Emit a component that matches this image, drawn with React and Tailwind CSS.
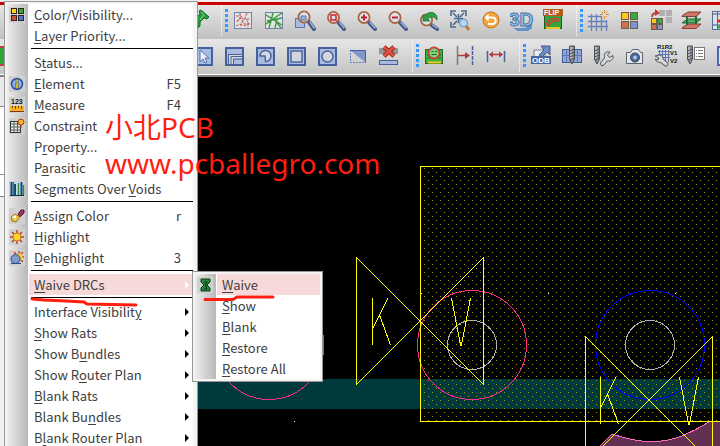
import { useState } from 'react';

const Svg = ({ children, size = 25 }) => (
    <svg width={size} height={size} viewBox={`0 0 ${size} ${size}`} fill="none" aria-hidden="true" className="shrink-0">
        {children}
    </svg>
);

/* ---------- toolbar icons (25 x 25) ---------- */

const Lens = ({ x, y, ex = 20, ey = 21, children }) => (
    <>
        <path d={`M${x + 5} ${y + 5}L${ex} ${ey}`} stroke="#3f5288" strokeWidth="4" strokeLinecap="round" />
        <path d={`M${x + 6} ${y + 5}L${ex} ${ey - 1}`} stroke="#9fb0d8" strokeWidth="1.5" strokeLinecap="round" />
        <circle cx={x} cy={y} r="5.6" fill="#dbe3f0" fillOpacity=".85" stroke="#a8663c" strokeWidth="1.8" />
        {children}
    </>
);

const Box = () => <rect x="4" y="5" width="17" height="17" fill="#a9bbe0" stroke="#46609a" strokeWidth="2" />;

const Screw = ({ x }) => (
    <>
        <path d={`M${x} 3h5v13l-2.5 5l-2.5-5z`} fill="#8d9196" stroke="#4a4e55" />
        <path d={`M${x + 1.5} 4v12`} stroke="#e4e6e8" />
        <path d={`M${x} 8l5-2M${x} 11l5-2M${x} 14l5-2M${x} 17l5-2`} stroke="#4a4e55" />
    </>
);

const Wrench = () => (
    <>
        <path d="M11.5 20.5L16 15" stroke="#555a62" strokeWidth="5" strokeLinecap="round" />
        <path d="M14 15c-2-4 1-7 5-6l-2.500 3l2 2.500l3.500-2c1 4-3 7-7 5z" fill="#d8dade" stroke="#555a62" />
        <path d="M11.5 20.5L16 15" stroke="#d8dade" strokeWidth="3" strokeLinecap="round" />
    </>
);

const Squares = ({ x = 4, y = 5, s = 7, g = 2 }) => (
    <>
        <rect x={x} y={y} width={s} height={s} fill="#ffc61e" stroke="#6b5d4e" />
        <rect x={x + s + g} y={y} width={s} height={s} fill="#38a838" stroke="#6b5d4e" />
        <rect x={x} y={y + s + g} width={s} height={s} fill="#cf6f50" stroke="#6b5d4e" />
        <rect x={x + s + g} y={y + s + g} width={s} height={s} fill="#7d95cf" stroke="#6b5d4e" />
    </>
);

const Pin = () => (
    <Svg>
        <path d="M15 2l8 7l-2 2l-3-1l-4 4v4l-2 2l-8-8l2-2h4l4-4l-1-3z" fill="#2a9a3c" stroke="#136b22" />
        <path d="M15 4l3 3l-4 5" stroke="#7fdc86" />
    </Svg>
);
const RatsRed = () => (
    <Svg>
        <rect x="3.5" y="4.5" width="17" height="16" fill="#e6e3e4" stroke="#7384a8" />
        <path d="M5 8h5l2 3h7M6 14l4-4l3 6h6M5 18l4-2l5 2l4-3M9 5v5l-3 3M16 5l-2 5l3 4v6M12 12l-3 7" stroke="#bb5a5a" strokeDasharray="3 1" />
    </Svg>
);
const RatsGreen = () => (
    <Svg>
        <rect x="3.5" y="4.5" width="17" height="16" fill="#dde6dc" stroke="#7384a8" />
        <path d="M4 7l16 10M5 13l15-3M7 20l4-15M11 11l9-6M13 20l2-9M4 16l7-5M14 13l5 7" stroke="#3f9448" strokeWidth="1.4" />
    </Svg>
);
const ZoomPoints = () => (
    <Svg>
        <rect x="2.5" y="10.5" width="9" height="9" fill="#a8bce2" stroke="#5b78b8" />
        <Lens x={11} y={9} ex={21}><path d="M8 8h5v4h-5z" fill="#9bb2dd" stroke="#5b78b8" /></Lens>
    </Svg>
);
const ZoomFit = () => <Svg><Lens x={9.5} y={9.5}><rect x="7" y="7" width="5" height="5" stroke="#d42a35" strokeWidth="1.6" /></Lens></Svg>;
const ZoomIn = () => <Svg><Lens x={9} y={9.5}><path d="M6 9.500h6M9 6.500v6" stroke="#c8202c" strokeWidth="2" /></Lens></Svg>;
const ZoomOut = () => <Svg><Lens x={9} y={9.5}><path d="M6 9.500h6" stroke="#c8202c" strokeWidth="2" /></Lens></Svg>;
const ZoomPrev = () => (
    <Svg>
        <Lens x={9.5} y={12} />
        <path d="M6 13V7l2 1c3-5 10-5 12 1v3c-3-4-7-4-9-1l2 2z" fill="#2ea043" stroke="#1b7230" strokeWidth=".8" />
    </Svg>
);
const ZoomWorld = () => (
    <Svg>
        <path d="M3 8V3h5M13 3h5v5M3 14v5h5M5 5l4 4M16 5l-4 4M5 17l4-4M10.5 6v9M6 10.5h9" stroke="#4d6a8e" strokeWidth="1.6" />
        <path d="M18 18l3 4" stroke="#c77a2c" strokeWidth="3" />
        <circle cx="15.5" cy="15" r="4" fill="#b6d6f2" stroke="#5f8fc0" />
    </Svg>
);
const Redraw = () => (
    <Svg>
        <circle cx="12" cy="12" r="8" fill="#f4a63a" stroke="#c96f1c" />
        <path d="M8 9.5h5.5a3 3 0 0 1 0 6.500H9" stroke="#fff" strokeWidth="2" />
        <path d="M5.5 9.5l4-4v8z" fill="#fff" />
    </Svg>
);
const View3d = () => (
    <Svg>
        <path d="M3 20h12l7-5v5l-4 3H8z" fill="#5f93c8" />
        <text x="-1" y="18" fontFamily="Liberation Sans, sans-serif" fontWeight="bold" fontSize="19" fill="#a5c8e8" stroke="#3f72a8">3D</text>
    </Svg>
);
const Flip = () => (
    <Svg>
        <rect x="3.5" y="7.5" width="17" height="13" fill="#35a53a" stroke="#1c5c20" />
        <path d="M5 17c2-6 8-8 13-6M7 18c3-5 7-6 11-5" stroke="#d0393a" strokeWidth="1.5" />
        <path d="M5 20h14" stroke="#f0c61e" strokeWidth="2" />
        <rect x="2" y="1" width="20" height="7" fill="#b55a17" />
        <text x="3" y="7" fontFamily="Liberation Sans, sans-serif" fontWeight="bold" fontSize="7" fill="#fff">FLIP</text>
    </Svg>
);
const GridToggle = () => (
    <Svg>
        <path d="M5.5 6v17M10.5 6v17M15.5 8v15M20.5 12v11M2 8.5h13M2 13.5h19M2 18.5h20" stroke="#6882b8" strokeWidth="1.3" />
        <path d="M18.5 2v3M18.5 8v3M14 6.5h3M20 6.5h3M15.5 3.5l2 2M21.5 3.5l-2 2M21 9l-1-1" stroke="#dc8a2e" />
    </Svg>
);
const ColorDlg = () => <Svg><Squares x={4.5} y={4.5} /></Svg>;
const ColorSwap = () => (
    <Svg>
        <path d="M11 2h6v6h-6zM18 2h6v6h-6zM18 9h6v6h-6z" fill="#b0b0b0" />
        <Squares x={3.5} y={10.5} s={5} g={1} />
        <path d="M4 9c0-3 2-4 5-4" stroke="#c33b35" strokeWidth="1.8" />
        <path d="M7 1l5 4l-5 3z" fill="#c33b35" />
    </Svg>
);
const Layers = () => (
    <Svg>
        <path d="M4 19l5-3h13l-5 4.500H3z" fill="#cf7468" stroke="#8a3c36" />
        <path d="M4 14l5-3h13l-5 4H3z" fill="#4fae62" stroke="#24693a" />
        <path d="M4 7l5-3h13l-5 4.500H3z" fill="#cf7468" stroke="#8a3c36" />
        <path d="M8 8v9M17 8v8" stroke="#24693a" strokeWidth="2" />
    </Svg>
);
const Stackup = () => (
    <Svg>
        <rect x="2.5" y="3.5" width="20" height="18" fill="#dde1ea" stroke="#5c6c90" />
        <path d="M3 6h20M3 17h20" stroke="#8c98b4" strokeWidth="2" />
        <path d="M7 13h10" stroke="#ed1c24" strokeWidth="3" />
        <path d="M7 19h10" stroke="#1fb03c" strokeWidth="3" />
        <path d="M7.5 4v17" stroke="#5c6c90" />
    </Svg>
);
const Select = () => (
    <Svg>
        <Box />
        <path d="M9 7v12l3-3l2 4l2-1l-2-4h4z" fill="#e8edf8" stroke="#5570a8" />
    </Svg>
);
const Trace = () => (
    <Svg>
        <Box />
        <path d="M9 21v-7.500h11" stroke="#d9d9d9" strokeWidth="4" />
        <path d="M6.5 21V11.5H20M11.5 21v-5H20M9 21v-7.500h11" stroke="#46609a" />
    </Svg>
);
const Shape = () => <Svg><Box /><path d="M12 13H7a5.500 5.500 0 1 1 5.500 5.500z" fill="#d3d8e2" stroke="#46609a" strokeWidth="1.4" /></Svg>;
const RectTool = () => <Svg><Box /><rect x="7" y="8" width="11" height="11" fill="#d3d6dc" stroke="#46609a" strokeWidth="1.4" /></Svg>;
const CircleTool = () => <Svg><Box /><circle cx="12.5" cy="13.5" r="5.5" fill="#d3d6dc" stroke="#46609a" strokeWidth="1.4" /></Svg>;
const CutShape = () => (
    <Svg>
        <path d="M4 7h16v13z" fill="#7f97cc" />
        <path d="M4.5 7v12.500H20" stroke="#5f7cc0" strokeDasharray="2 1" />
        <path d="M4 7.500h15.500V20" stroke="#46609a" />
    </Svg>
);
const DeleteRow = () => (
    <Svg>
        <rect x="2" y="5" width="19" height="6" fill="#969696" />
        <path d="M7 4l10 9M17 4L7 13" stroke="#9a2a22" strokeWidth="4.5" />
        <path d="M7 4l10 9M17 4L7 13" stroke="#e0523e" strokeWidth="2.5" />
        <rect x="2.5" y="17.5" width="18" height="4" fill="#a9bae0" stroke="#46609a" />
    </Svg>
);
const BoardCheck = () => (
    <Svg>
        <rect x="3.5" y="6.5" width="17" height="14" fill="#37b83c" stroke="#1c6a20" />
        <path d="M5 9h3M5 12h3M5 15h4M16 12h3M16 15h3" stroke="#176f1b" />
        <path d="M6 19.5h13" stroke="#f4cd22" strokeWidth="2" />
        <circle cx="12" cy="10" r="5.5" fill="#7fd483" stroke="#cf3b3b" strokeWidth="1.8" />
        <path d="M9.500 8.500h2M13 8.500h2M9.500 11.500h5" stroke="#1c6a20" />
    </Svg>
);
const AlignTo = () => (
    <Svg>
        <path d="M4.5 3v19" stroke="#7b7b7b" strokeWidth="1.5" />
        <path d="M19.5 3v19" stroke="#46609a" strokeWidth="1.5" strokeDasharray="4 1" />
        <path d="M5 12.5h9" stroke="#b3393c" strokeWidth="1.5" />
        <path d="M12 9l5 3.500l-5 3.500z" fill="#b3393c" />
    </Svg>
);
const Dimension = () => (
    <Svg>
        <path d="M3.5 8v11M20.5 8v11" stroke="#46609a" strokeWidth="1.5" />
        <path d="M6 11.5h12" stroke="#b3393c" strokeWidth="1.5" />
        <path d="M9 8.5v6l-4-3zM15 8.5v6l4-3z" fill="#b3393c" />
    </Svg>
);
const Odb = () => (
    <Svg>
        <path d="M5 7h11v12H5z" fill="#e8ebf2" stroke="#74809c" />
        <path d="M10 12l5-5l-3-4h9v9l-3-3l-5 5z" fill="#6d8cc6" stroke="#40568c" />
        <rect x="2" y="13" width="20" height="8" fill="#4a659f" />
        <text x="3" y="20" fontFamily="Liberation Sans, sans-serif" fontWeight="bold" fontSize="8" fill="#fff">ODB</text>
    </Svg>
);
const DrillTable = () => (
    <Svg>
        <rect x="2.5" y="6.5" width="19" height="13" fill="#8fa6d6" stroke="#46609a" />
        <path d="M6.5 7v12M17.5 7v12M3 12.5h18" stroke="#5f78b4" />
        <Screw x={9.5} />
    </Svg>
);
const DrillSetup = () => <Svg><Screw x={3.5} /><Wrench /></Svg>;
const Camera = () => (
    <Svg>
        <path d="M4.5 9.5h4l2-3h6l2 3h2v11h-16z" fill="#e4e6ea" stroke="#5d6470" />
        <circle cx="13" cy="14.5" r="4.5" fill="#48689c" stroke="#3c4454" />
        <circle cx="13" cy="14.5" r="2" fill="#a9c6ec" />
    </Svg>
);
const Rename = () => (
    <Svg>
        <path d="M6.5 7v9M9.5 7v12M12.5 7v12M15.5 7v12M5 8.5h12M5 11.5h12M5 14.5h12" stroke="#5b76b0" />
        <path d="M13 21l-5-4" stroke="#555a62" strokeWidth="5" strokeLinecap="round" />
        <path d="M2 13l4-1c4 0 5 4 3 7c-3 1-6 0-7-3l3 1l1-2z" fill="#d8dade" stroke="#555a62" />
        <path d="M13 21l-5-4" stroke="#d8dade" strokeWidth="3" strokeLinecap="round" />
        <g fontFamily="Liberation Sans, sans-serif" fontWeight="bold" fontSize="6" fill="#111">
            <text x="4" y="6">R1R2</text>
            <text x="17" y="12">V1</text>
            <text x="17" y="20">V2</text>
        </g>
    </Svg>
);
const DrillLegend = () => (
    <Svg>
        <rect x="10.5" y="4.5" width="10" height="12" fill="#fff" stroke="#7a7a7a" />
        <path d="M12 7.500h1M14 7.500h5M12 10.500h1M14 10.500h5M12 13.500h1M14 13.500h5" stroke="#7a7a7a" />
        <Screw x={3.5} />
    </Svg>
);
const Report = () => <Svg><rect x="3" y="4" width="19" height="18" fill="#dfe5f2" stroke="#4a68b4" strokeWidth="2" /></Svg>;

/* ---------- menu icons (16 x 16) ---------- */

const ColorIcon = () => (
    <Svg size={16}>
        <path d="M2 1h6v6H2zM9 1h6v6H9zM2 8h6v6H2zM9 8h6v6H9z" fill="#2e2422" />
        <path d="M3 2h4v4H3z" fill="#ffd21e" /><path d="M10 2h4v4h-4z" fill="#35a52c" />
        <path d="M3 9h4v4H3z" fill="#c8503a" /><path d="M10 9h4v4h-4z" fill="#5078c8" />
    </Svg>
);
const InfoIcon = () => (
    <Svg size={16}>
        <circle cx="8" cy="8" r="5.5" fill="#8fb0e8" stroke="#2b4da6" strokeWidth="1.5" />
        <path d="M8 3v2M8 6.500v6" stroke="#555018" strokeWidth="3" />
        <path d="M8 3.500v1.500M8 7v5" stroke="#e6e61c" strokeWidth="1.5" />
    </Svg>
);
const RulerIcon = () => (
    <Svg size={16}>
        <text x="2" y="7" fontFamily="Liberation Sans, sans-serif" fontWeight="bold" fontSize="7" fill="#111">123</text>
        <rect x="1" y="9" width="14" height="5" fill="#f4b21c" /><path d="M1 14.5h14" stroke="#8a2f14" />
        <path d="M3.5 9v2M6.5 9v3M9.5 9v2M12.5 9v3" stroke="#8a2f14" />
    </Svg>
);
const ConstraintIcon = () => (
    <Svg size={16}>
        <rect x="1.5" y="3.5" width="10" height="11" fill="#e9ecea" stroke="#333" />
        <path d="M2 6h9M2 9h9M2 12h9M5 4v10M8.5 4v10" stroke="#4a6a50" />
        <circle cx="12" cy="4" r="3" fill="#f5b52a" stroke="#b03c14" /><path d="M12 7v3" stroke="#b03c14" />
    </Svg>
);
const SegmentsIcon = () => (
    <Svg size={16}>
        <rect x="1" y="1" width="14" height="14" fill="#c7dcea" />
        <path d="M2.5 1v13M6 3v11M12.5 1v13" stroke="#1c3c88" strokeWidth="2" />
        <path d="M4.5 1v13M9.500 2v12M14.5 4v10" stroke="#2b8a3e" strokeWidth="1.5" />
        <path d="M1 14.5h14" stroke="#1c2c50" />
    </Svg>
);
const BrushIcon = () => (
    <Svg size={16}>
        <path d="M9 6l3-4h3v3l-4 4z" fill="#a0305c" stroke="#5c1534" />
        <path d="M2 9l4-3l5 3l-4 5l-4-1z" fill="#e8c43c" stroke="#a0782a" /><path d="M3 9l4-2v4z" fill="#fff" />
    </Svg>
);
const SunIcon = () => (
    <Svg size={16}>
        <path d="M8 1v3M8 12v3M1 8h3M12 8h3M3 3l2 2M13 3l-2 2M3 13l2-2M13 13l-2-2" stroke="#b8401c" strokeWidth="1.5" />
        <circle cx="8" cy="8" r="4" fill="#ffd42a" stroke="#c87818" />
    </Svg>
);
const DimSunIcon = () => (
    <Svg size={16}>
        <path d="M10 1v3M15 7h-3M14 2l-2 2M5 2l2 2M14 12l-2-2" stroke="#c84a1c" strokeWidth="1.5" />
        <circle cx="10" cy="7" r="3.5" fill="#ffc62a" />
        <circle cx="6.5" cy="9" r="4.5" fill="#7d9ccc" stroke="#2c4a86" /><path d="M2 13.5h10" stroke="#2c4a86" />
    </Svg>
);
const WaiveIcon = () => (
    <Svg size={16}>
        <path d="M4 2h9v3l-3 3l3 3v3H4v-3l3-3l-3-3z" fill="#1f8a3a" stroke="#0e3c1a" />
        <path d="M7 5h3l-1.500 3L10 12H7" stroke="#0c2c14" />
    </Svg>
);

const row1Fix = [['Fix', Pin]];
const row1Zoom = [
    ['Unrats All', RatsRed], ['Rats All', RatsGreen], ['Zoom Points', ZoomPoints], ['Zoom Fit', ZoomFit],
    ['Zoom In', ZoomIn], ['Zoom Out', ZoomOut], ['Zoom Previous', ZoomPrev], ['Zoom World', ZoomWorld],
    ['Redraw', Redraw], ['3D View', View3d], ['Flip Design', Flip],
];
const row1Setup = [['Grid Toggle', GridToggle], ['Color', ColorDlg], ['Swap Colors', ColorSwap], ['Layers', Layers], ['Cross Section', Stackup]];
const row2Shape = [
    ['Select', Select], ['Trace', Trace], ['Shape', Shape], ['Rectangle', RectTool],
    ['Circle', CircleTool], ['Cut Shape', CutShape], ['Delete', DeleteRow],
];
const row2Dim = [['Check Board', BoardCheck], ['Align', AlignTo], ['Dimension', Dimension]];
const row2Mfg = [
    ['ODB', Odb], ['Drill Table', DrillTable], ['Drill Setup', DrillSetup], ['Snapshot', Camera],
    ['Rename', Rename], ['Drill Legend', DrillLegend], ['Report', Report],
];

const menuGroups = [
    [{ label: '&Color/Visibility...', Icon: ColorIcon }, { label: '&Layer Priority...' }],
    [
        { label: 'S&tatus...' },
        { label: '&Element', Icon: InfoIcon, hotkey: 'F5' },
        { label: '&Measure', Icon: RulerIcon, hotkey: 'F4' },
        { label: 'Constra&int', Icon: ConstraintIcon },
        { label: 'P&roperty...' },
        { label: 'P&arasitic' },
        { label: 'Segments Over &Voids', Icon: SegmentsIcon },
    ],
    [
        { label: '&Assign Color', Icon: BrushIcon, hotkey: 'r' },
        { label: '&Highlight', Icon: SunIcon },
        { label: '&Dehighlight', Icon: DimSunIcon, hotkey: '3' },
    ],
    [{ label: '&Waive DRCs', sub: true }],
    [
        { label: 'Interface Visibilit&y', sub: true },
        { label: '&Show Rats', sub: true },
        { label: 'Show B&undles', sub: true },
        { label: 'Show R&outer Plan', sub: true },
        { label: '&Blank Rats', sub: true },
        { label: 'Blank Bu&ndles', sub: true },
        { label: 'B&lank Router Plan', sub: true },
    ],
];

const waiveItems = [{ label: '&Waive', Icon: WaiveIcon }, { label: '&Show' }, { label: '&Blank' }, { label: '&Restore' }, { label: '&Restore All' }];

const Grip = () => (
    <div className="flex h-full w-[14px] shrink-0 justify-end gap-[3px] pl-[7px]">
        <div className="h-full border-l border-dotted border-white" />
        <div className="h-[23px] w-[3px] self-center bg-[repeating-linear-gradient(to_bottom,#3399ff_0_3px,transparent_3px_5px)]" />
    </div>
);

const ToolGroup = ({ tools }) => tools.map(([name, Icon]) => (
    <button key={name} title={name} aria-label={name} className="flex w-[31px] shrink-0 justify-center">
        <Icon />
    </button>
));

function Label({ text }) {
    const i = text.indexOf('&');
    return (
        <span className="whitespace-pre">
            {text.slice(0, i)}
            <span className="underline decoration-1 underline-offset-2">{text[i + 1]}</span>
            {text.slice(i + 2)}
        </span>
    );
}

function MenuItem({ item, active, onHover }) {
    const { label, Icon, hotkey, sub } = item;
    return (
        <li onMouseEnter={onHover}>
            <button className="flex h-[21px] w-full text-left">
                <span className="flex h-full w-[22px] shrink-0 items-center pl-[2px]">
                    {Icon && <span className="bg-[#d0d0d0]"><Icon /></span>}
                </span>
                <span className={`flex h-full flex-1 items-center pl-[5px] pr-1 ${active ? 'bg-[#f7d9d9]' : ''}`}>
                    <span className="flex-1"><Label text={label} /></span>
                    {hotkey && <span className="pr-2">{hotkey}</span>}
                    {sub && (
                        <svg width="4" height="8" viewBox="0 0 4 8" className={active ? 'fill-white' : 'fill-black'}>
                            <path d="M0 0l4 4l-4 4z" />
                        </svg>
                    )}
                </span>
            </button>
        </li>
    );
}

const menuBox = "absolute border border-[#979797] bg-[#f4f4f4] p-[2px] font-['Noto_Sans_CJK_SC',sans-serif]";
const menuFill = 'bg-[linear-gradient(to_right,#ededed,#b9b9b9_21px,#fff_21px)]';

const Bowtie = ({ x, y }) => (
    <path d={`M${x} ${y}v127l127-127v127z`} />
);
const Letters = ({ x, y }) => (
    <path d={`M${x} ${y}v47M${x + 15.5} ${y}l-15 30M${x + 7} ${y + 17}l11 30M${x + 79} ${y}l9 47h1l9-47`} />
);

function Board() {
    return (
        <svg viewBox="198 77 522 369" preserveAspectRatio="xMinYMin slice" shapeRendering="crispEdges" fill="none" className="h-full w-full">
            <defs>
                <pattern id="dots" x="424" y="172" width="8" height="8" patternUnits="userSpaceOnUse">
                    <rect x="4" y="0" width="1" height="1" fill="#a0a000" />
                    <rect x="0" y="4" width="1" height="1" fill="#a0a000" />
                </pattern>
            </defs>
            <rect x="198" y="379" width="522" height="30" fill="#003a3c" />
            <rect x="420.5" y="166.5" width="320" height="255" fill="url(#dots)" />
            <path d="M600 446l12-12q40 14 70 2q14-6 27-14h12v25z" fill="#632f52" />
            <path d="M600 446l12-12q40 14 70 2q14-6 27-14" stroke="#ff6ec0" />
            <g stroke="#ff2b85">
                <circle cx="269" cy="345" r="54.5" />
                <circle cx="472" cy="345" r="54.5" />
                <path d="M323.5 335v20" />
            </g>
            <circle cx="650" cy="345" r="54.5" stroke="#0000ff" />
            <g stroke="#b4b4b4">
                <circle cx="472" cy="345" r="24.5" />
                <circle cx="650" cy="345" r="24.5" />
            </g>
            <g stroke="#ffff00">
                <rect x="420.5" y="166.5" width="320" height="255" />
                <Bowtie x={356.5} y={257.5} />
                <Bowtie x={585.5} y={336.5} />
                <Letters x={372.5} y={298} />
                <Letters x={600.5} y={377} />
            </g>
            <path d="M421 293h1v1h-1zM548 293h1v1h-1zM675 293h1v1h-1zM294 421h1v1h-1z" fill="#fff" />
        </svg>
    );
}

export default function App() {
    const [open, setOpen] = useState('&Waive DRCs');

    return (
        <div className="relative flex h-screen flex-col overflow-hidden bg-[#f0f0f0] font-['Noto_Sans','Noto_Sans_CJK_SC',sans-serif] text-[13px] leading-[20px] text-[#404040]">
            <header className="shrink-0 overflow-hidden border-b-2 border-[#808080] pt-[2px]">
                <div className="h-[3px] bg-[#cc0000]" />
                <div className="flex h-[34px] items-center bg-linear-to-b from-[#e6e6e6] to-[#c0c0c0] pb-[3px] pl-[183px]">
                    <ToolGroup tools={row1Fix} />
                    <Grip />
                    <ToolGroup tools={row1Zoom} />
                    <Grip />
                    <ToolGroup tools={row1Setup} />
                </div>
                <div className="flex h-[36px] items-center border-b border-white bg-linear-to-b from-[#e6e6e6] to-[#c4c4c4] pb-[2px]">
                    <div className="mr-[184px] h-5 w-1 shrink-0 border-y-2 border-[#c83c46] bg-[#35a53a]" />
                    <ToolGroup tools={row2Shape} />
                    <Grip />
                    <ToolGroup tools={row2Dim} />
                    <Grip />
                    <ToolGroup tools={row2Mfg} />
                </div>
            </header>

            <main className="flex min-h-0 flex-1">
                <aside className="w-[198px] shrink-0">
                    <div className="h-[30px] border-b border-[#8a8a8a] bg-[#eaeaea]" />
                    <div className="h-[68px] border-b border-[#8a8a8a] bg-white" />
                    <div className="h-[22px] border-b border-[#8a8a8a] bg-white" />
                </aside>
                <section className="min-w-0 flex-1 bg-black">
                    <Board />
                </section>
            </main>

            <nav className={`${menuBox} left-[4px] top-px w-[194px] pr-[4px]`}>
                <div className={menuFill}>
                    {menuGroups.map((group, i) => (
                        <ul key={i}>
                            {i > 0 && <li role="separator" className="ml-6 mt-[2px] mb-[3px] h-px bg-black" />}
                            {group.map((item) => (
                                <MenuItem key={item.label} item={item} active={open === item.label} onHover={() => setOpen(item.label)} />
                            ))}
                        </ul>
                    ))}
                </div>
            </nav>

            {open === '&Waive DRCs' && (
                <nav className={`${menuBox} left-[192px] top-[271px] w-[131px]`}>
                    <ul className={menuFill}>
                        {waiveItems.map((item, i) => <MenuItem key={item.label} item={item} active={i === 0} />)}
                    </ul>
                </nav>
            )}

            <div className="pointer-events-none absolute left-[105px] top-[109px] whitespace-nowrap text-[28px] leading-[36px] text-[#ff1e10]">
                <p>小北PCB</p>
                <p>www.pcballegro.com</p>
            </div>
            <svg width="300" height="40" viewBox="0 280 300 40" fill="none" stroke="#ff1e10" strokeWidth="3" strokeLinecap="round" className="pointer-events-none absolute left-0 top-[280px]">
                <path d="M32 299l12 1l22 1l18 1l3 2l49 1M205 299.500h28l4-2.500h36" />
            </svg>
        </div>
    );
}
